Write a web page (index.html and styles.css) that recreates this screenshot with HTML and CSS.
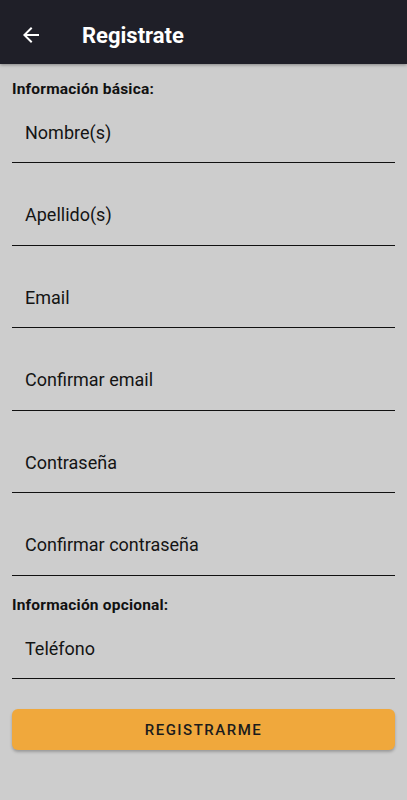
FILE: index.html
```html
<!DOCTYPE html>
<html>
<head>
  <meta charset="utf-8">
  <title>Registrate</title>
  <link rel="stylesheet" href="styles.css">
</head>
<body>
  <div class="toolbar">
    <svg class="back" viewBox="0 0 24 24" width="24" height="24">
      <path d="M20 11H7.83l5.59-5.59L12 4l-8 8 8 8 1.41-1.41L7.83 13H20v-2z" fill="#fff"/>
    </svg>
    <div class="title">Registrate</div>
  </div>

  <div class="content">
    <div class="section__label">Información básica:</div>
    <div class="field">Nombre(s)</div>
    <div class="field">Apellido(s)</div>
    <div class="field">Email</div>
    <div class="field">Confirmar email</div>
    <div class="field">Contraseña</div>
    <div class="field">Confirmar contraseña</div>

    <div class="section__label opcional">Información opcional:</div>
    <div class="field">Teléfono</div>

    <button class="btn">REGISTRARME</button>
  </div>
</body>
</html>
```

FILE: styles.css
```css
html, body {
  margin: 0;
  padding: 0;
}

body {
  background: #cdcdcd;
  font-family: Roboto, "Noto Sans", sans-serif;
  color: #1a1a1a;
  min-height: 800px;
}

.toolbar {
  height: 64px;
  box-sizing: border-box;
  padding: 6px 0 0 19px;
  background: #1f1f28;
  display: flex;
  align-items: center;
  box-shadow: 0 1px 3px rgba(0,0,0,0.35);
}

.back {
  display: block;
}

.title {
  margin-left: 39px;
  color: #fff;
  font-size: 22px;
  font-weight: 700;
}

.content {
  padding: 16px 12px 0 12px;
  display: flex;
  flex-direction: column;
}

.section__label {
  font-size: 15.5px;
  font-weight: 700;
  line-height: 18px;
  letter-spacing: 0.2px;
  color: #111;
}

.section__label.opcional {
  margin-top: 20px;
}

.field {
  font-size: 18px;
  line-height: 22px;
  padding: 41px 0 18.6px 13px;
  border-bottom: 1px solid #111;
  color: #141414;
}

.section__label + .field {
  padding-top: 23.5px;
}

.btn {
  margin-top: 30px;
  height: 41px;
  border: 0;
  border-radius: 6px;
  background: #f0a83c;
  color: #1c1c1c;
  font-family: Roboto, sans-serif;
  font-size: 15px;
  font-weight: 500;
  letter-spacing: 1.5px;
  box-shadow: 0 2px 3px rgba(0,0,0,0.25);
  cursor: pointer;
}
```
